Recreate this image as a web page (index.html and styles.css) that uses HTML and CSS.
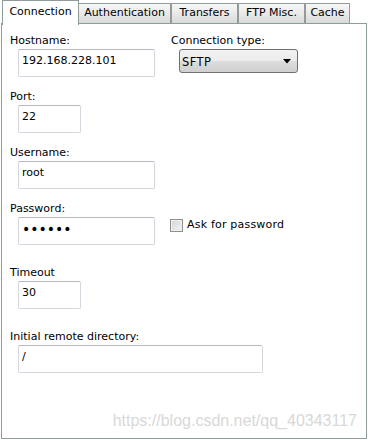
FILE: index.html
```html
<!DOCTYPE html>
<html lang="en">

<head>
    <meta charset="UTF-8">
    <meta name="viewport" content="width=device-width, initial-scale=1.0">
    <title>Session - Connection</title>
    <link rel="stylesheet" href="styles.css">
</head>

<body>
    <div class="dialog">
        <!-- tab strip -->
        <div class="tabs">
            <span class="tab active">Connection</span>
            <span class="tab tab-auth">Authentication</span>
            <span class="tab tab-transfers">Transfers</span>
            <span class="tab tab-ftp">FTP Misc.</span>
            <span class="tab tab-cache">Cache</span>
        </div>

        <div class="panel">
            <div class="row">
                <div class="field col-left">
                    <label>Hostname:</label>
                    <input class="text wide" type="text" value="192.168.228.101">
                </div>
                <div class="field">
                    <label>Connection type:</label>
                    <div class="select">
                        <span class="select-value">SFTP</span>
                        <svg width="8" height="5" viewBox="0 0 8 5">
                            <polygon points="0,0 8,0 4,4.5" fill="#000" />
                        </svg>
                    </div>
                </div>
            </div>

            <div class="field spaced">
                <label>Port:</label>
                <input class="text short" type="text" value="22">
            </div>

            <div class="field spaced">
                <label>Username:</label>
                <input class="text wide" type="text" value="root">
            </div>

            <div class="field spaced">
                <label>Password:</label>
                <div class="pw-row">
                    <input class="text wide password" type="password" value="123456">
                    <div class="check">
                        <span class="box"></span>
                        <span>Ask for password</span>
                    </div>
                </div>
            </div>

            <div class="field spaced-lg">
                <label>Timeout</label>
                <input class="text short" type="text" value="30">
            </div>

            <div class="field spaced-lg">
                <label>Initial remote directory:</label>
                <input class="text long" type="text" value="/">
            </div>
        </div>

        <div class="watermark">https://blog.csdn.net/qq_40343117</div>
    </div>
</body>

</html>
```

FILE: styles.css
```css
body {
    margin: 0;
    background: #fff;
    color: #000;
    font-family: "DejaVu Sans", Tahoma, sans-serif;
    font-size: 11px;
}

.dialog {
    position: relative;
    width: 368px;
    height: 440px;
    padding-left: 1px;
    box-sizing: border-box;
}

/* tabs */
.tabs {
    display: flex;
    align-items: flex-start;
    height: 23px;
    padding-left: 1px;
    position: relative;
    z-index: 1;
}

.tab {
    box-sizing: border-box;
    height: 20px;
    margin-top: 3px;
    padding-top: 2px;
    border: 1px solid #919b9c;
    border-bottom: none;
    background: linear-gradient(#f7f7f7, #e6e6e6 60%, #dadada);
    text-align: center;
    line-height: 14px;
    white-space: nowrap;
}

.tab.active {
    width: 77px;
    height: 25px;
    margin-top: 0;
    padding-top: 4px;
    background: #fff;
    position: relative;
    z-index: 2;
}

.tab-auth {
    width: 93px;
    margin-left: -1px;
}

.tab-transfers,
.tab-ftp {
    width: 67px;
}

.tab-cache {
    width: 45px;
}

/* page */
.panel {
    width: 366px;
    height: 416px;
    box-sizing: border-box;
    border: 1px solid #919b9c;
    background: #fff;
    padding: 10px 8px 0 8px;
}

.row {
    display: flex;
}

.col-left {
    width: 161px;
}

.field label {
    display: block;
    line-height: 14px;
    margin-bottom: 1px;
}

.spaced {
    margin-top: 13px;
}

.spaced-lg {
    margin-top: 21px;
}

.text {
    display: block;
    box-sizing: border-box;
    height: 28px;
    margin: 0 0 0 8px;
    padding: 0 3px 6px;
    border: 1px solid #d3d7de;
    border-top-color: #b5b9c0;
    border-radius: 2px;
    background: #fff;
    color: #000;
    font: inherit;
    outline: none;
}

.text.wide {
    width: 137px;
}

.text.short {
    width: 63px;
}

.text.long {
    width: 245px;
}

.text.password {
    font-size: 14px;
    padding-bottom: 5px;
}

.select {
    display: flex;
    align-items: center;
    justify-content: space-between;
    box-sizing: border-box;
    width: 119px;
    height: 24px;
    margin-left: 8px;
    padding: 1px 6px 0 2px;
    border: 1px solid #707070;
    border-radius: 3px;
    background: linear-gradient(#f2f2f2, #ebebeb 48%, #dddddd 52%, #cfcfcf);
}

.select-value {
    font-size: 11.5px;
    letter-spacing: 0.4px;
}

.pw-row {
    display: flex;
    align-items: flex-start;
}

.check {
    display: flex;
    align-items: center;
    gap: 4px;
    margin: 1px 0 0 15px;
    line-height: 14px;
    letter-spacing: 0.2px;
}

.box {
    display: block;
    width: 13px;
    height: 13px;
    box-sizing: border-box;
    border: 1px solid #8e8f8f;
    background: linear-gradient(135deg, #d2d4d8, #f4f4f4);
    box-shadow: inset 0 0 0 1px #f0f0f0;
}

.watermark {
    position: absolute;
    top: 412px;
    right: 11px;
    color: #d8d8d8;
    font-family: "Liberation Sans", Arial, sans-serif;
    font-size: 16px;
    line-height: 18px;
    white-space: nowrap;
}
```
